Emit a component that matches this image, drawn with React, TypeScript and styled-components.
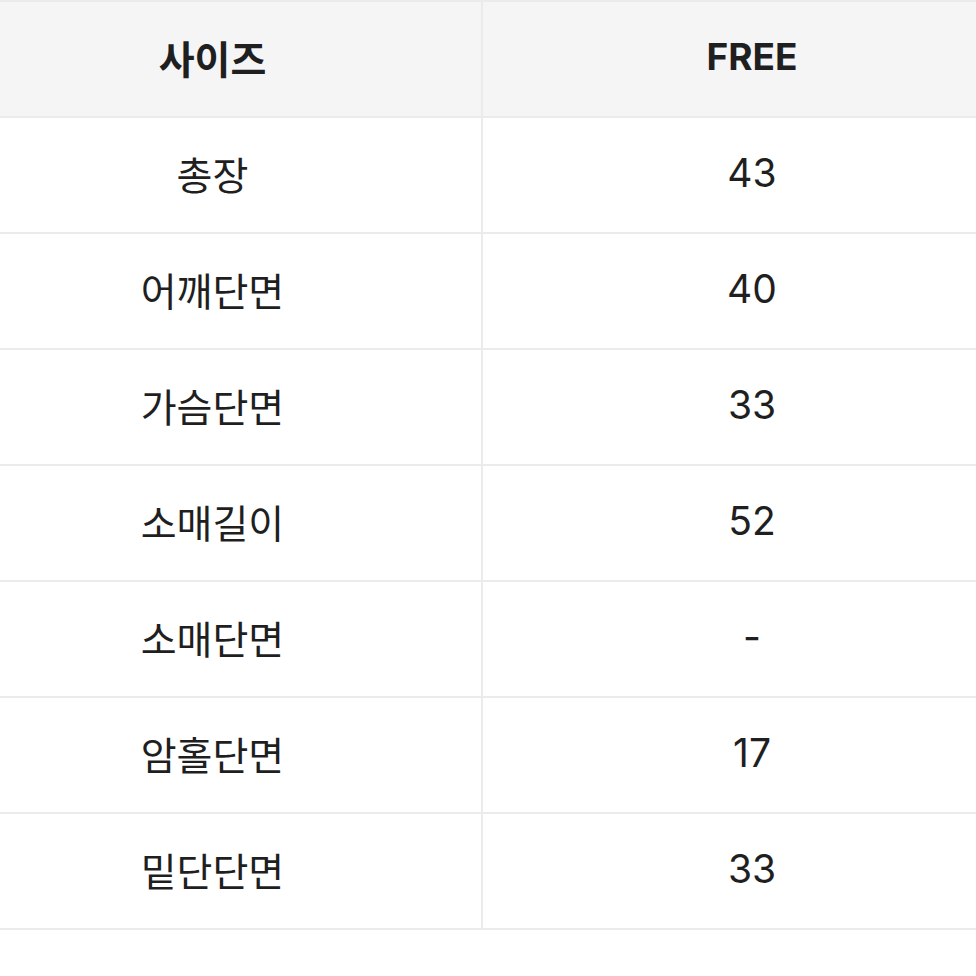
import React from "react";
import styled, { createGlobalStyle } from "styled-components";

const Global = createGlobalStyle`
  html, body { margin: 0; padding: 0; background: #ffffff; overflow: hidden; }
  body { font-family: "Noto Sans CJK KR", "Noto Sans", sans-serif; }
`;

const Frame = styled.div`
  width: 976px;
  overflow: hidden;
`;

const Table = styled.div`
  display: grid;
  grid-template-columns: 539px 538px;
  width: 1077px;
  margin-left: -56px;
  border-top: 2px solid #ebebeb;
`;

const Cell = styled.div<{ $head?: boolean; $left?: boolean }>`
  height: 116px;
  box-sizing: border-box;
  padding-bottom: 5px;
  display: flex;
  align-items: center;
  justify-content: center;
  border-bottom: 2px solid #ebebeb;
  border-right: ${(p) => (p.$left ? "2px solid #ebebeb" : "none")};
  background: ${(p) => (p.$head ? "#f5f5f5" : "#ffffff")};
  color: #1f1f1f;
  font-family: ${(p) =>
    p.$left
      ? `"Noto Sans CJK KR", "Noto Sans", sans-serif`
      : `Inter, "Noto Sans CJK KR", sans-serif`};
  font-size: ${(p) => (p.$head && !p.$left ? "37px" : "39px")};
  font-weight: ${(p) => (p.$head ? 700 : 400)};
`;

const rows: [string, string][] = [
  ["총장", "43"],
  ["어깨단면", "40"],
  ["가슴단면", "33"],
  ["소매길이", "52"],
  ["소매단면", "-"],
  ["암홀단면", "17"],
  ["밑단단면", "33"],
];

export default function App() {
  return (
    <>
      <Global />
      <Frame>
        <Table>
          <Cell $head $left>사이즈</Cell>
          <Cell $head>FREE</Cell>
          {rows.map(([k, v]) => (
            <React.Fragment key={k}>
              <Cell $left>{k}</Cell>
              <Cell>{v}</Cell>
            </React.Fragment>
          ))}
        </Table>
      </Frame>
    </>
  );
}
